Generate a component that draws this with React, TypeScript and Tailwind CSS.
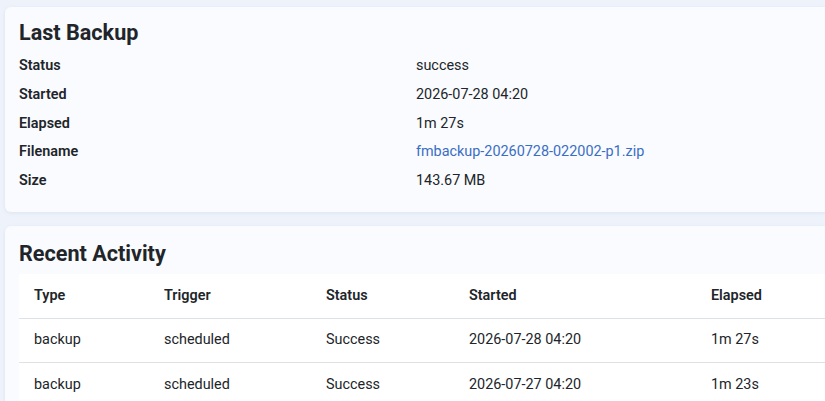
const summary = [
  { label: "Status", value: "success" },
  { label: "Started", value: "2026-07-28 04:20" },
  { label: "Elapsed", value: "1m 27s" },
  { label: "Filename", value: "fmbackup-20260728-022002-p1.zip", link: true },
  { label: "Size", value: "143.67 MB" }
];

const activity = [
  { type: "backup", trigger: "scheduled", status: "Success", started: "2026-07-28 04:20", elapsed: "1m 27s" },
  { type: "backup", trigger: "scheduled", status: "Success", started: "2026-07-27 04:20", elapsed: "1m 23s" }
];

export default function App() {
  return (
    <div
      className="h-[401px] w-[825px] overflow-hidden bg-[#eef3fb] pl-[5px] pt-[7px] text-[#212529]"
      style={{ fontFamily: "Roboto, 'Liberation Sans', sans-serif" }}
    >
      <section className="w-[840px] rounded-md bg-[#f9fbfe] px-[14px] pb-[17px] pt-[13px] shadow-[0_1px_4px_rgba(30,60,120,0.08)]">
        <h2 className="text-[21.6px] font-bold leading-[26px]">Last Backup</h2>
        <dl className="mt-[5.5px] grid grid-cols-[397px_1fr] text-[14.4px] leading-[21.6px]">
          {summary.map((row) => (
            <div key={row.label} className="contents">
              <dt className="py-[3.6px] font-semibold">{row.label}</dt>
              <dd className="py-[3.6px]">
                {row.link ? (
                  <a href="#" className="text-[#3a6ec4]">
                    {row.value}
                  </a>
                ) : (
                  row.value
                )}
              </dd>
            </div>
          ))}
        </dl>
      </section>

      <section className="mt-[14px] w-[840px] rounded-md bg-[#f9fbfe] px-[14px] pt-[15px] shadow-[0_1px_4px_rgba(30,60,120,0.08)]">
        <h2 className="text-[21.6px] font-bold leading-[26px]">Recent Activity</h2>
        <table className="mt-[7px] w-full border-collapse bg-white text-left text-[14.4px] leading-[21.6px]">
          <thead>
            <tr className="border-b border-[#dee2e6]">
              <th className="w-[130px] px-[15px] py-[10.8px] font-semibold">Type</th>
              <th className="w-[162px] px-[15px] py-[10.8px] font-semibold">Trigger</th>
              <th className="w-[143px] px-[15px] py-[10.8px] font-semibold">Status</th>
              <th className="w-[242px] px-[15px] py-[10.8px] font-semibold">Started</th>
              <th className="px-[15px] py-[10.8px] font-semibold">Elapsed</th>
            </tr>
          </thead>
          <tbody>
            {activity.map((row) => (
              <tr key={row.started} className="border-b border-[#dee2e6]">
                <td className="px-[15px] py-[10.8px]">{row.type}</td>
                <td className="px-[15px] py-[10.8px]">{row.trigger}</td>
                <td className="px-[15px] py-[10.8px]">{row.status}</td>
                <td className="px-[15px] py-[10.8px]">{row.started}</td>
                <td className="px-[15px] py-[10.8px]">{row.elapsed}</td>
              </tr>
            ))}
          </tbody>
        </table>
      </section>
    </div>
  );
}
